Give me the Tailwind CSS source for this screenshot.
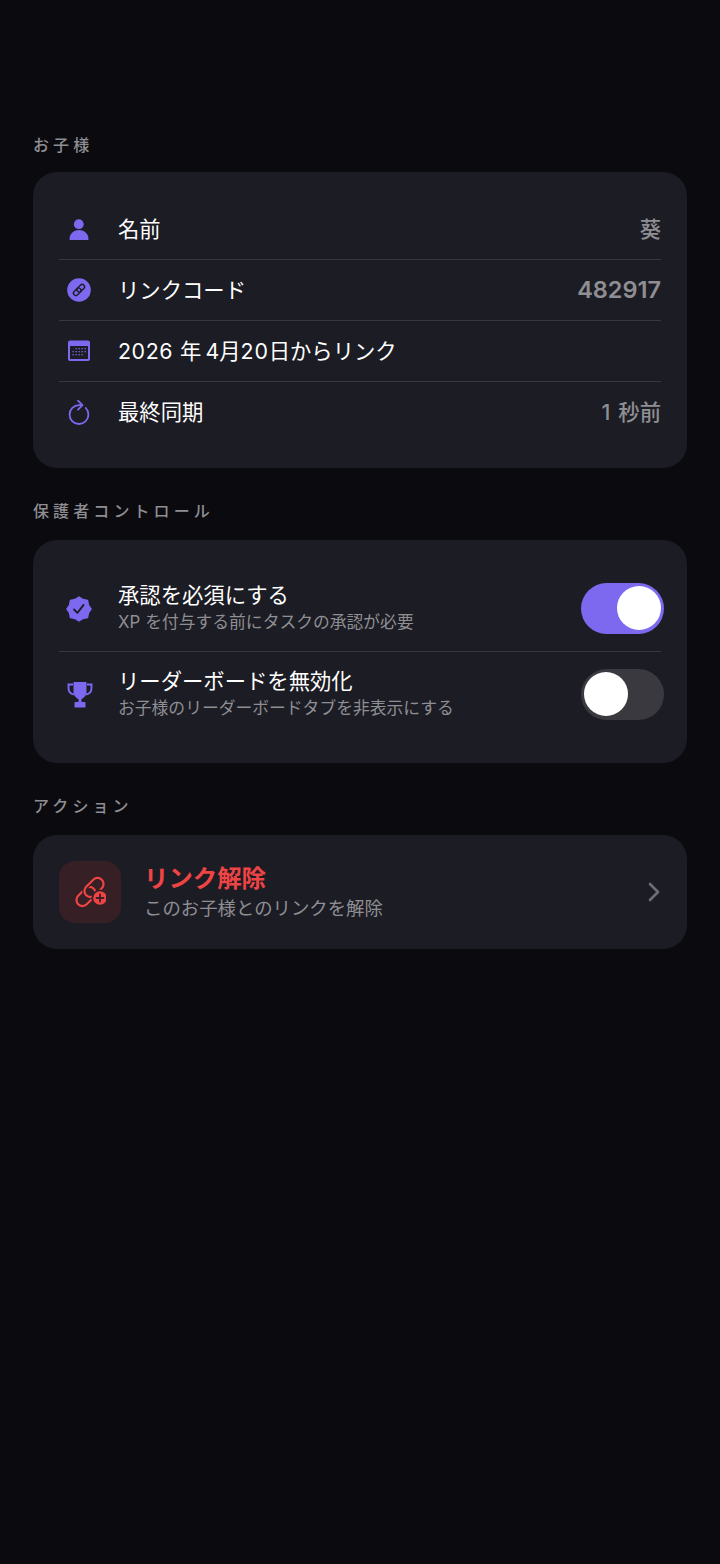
<!DOCTYPE html>
<html lang="ja"><head><meta charset="utf-8">
<script src="https://cdn.jsdelivr.net/npm/@tailwindcss/browser@4"></script>
</head>
<body class="bg-[#0a0a0f]">
<div class="w-[720px] h-[1564px] overflow-hidden pl-[33px] pr-[33px] pt-[133px] font-['Inter','Noto_Sans_CJK_JP',sans-serif] text-white">

<div class="h-[24px] leading-[24px] text-[16px] font-medium tracking-[4.1px] text-[#8e8e93]">お子様</div>
<div class="mt-[15px] h-[296px] rounded-[24px] bg-[#1c1c24] px-[26px] pt-[27px]">
  <div class="h-[61px] flex items-center border-b border-[#38383d]">
    <div class="w-[40px] flex justify-center">
      <svg class="w-[24px] h-[24px]" viewBox="0 0 24 24" fill="#7c69ef"><circle cx="11.800" cy="7.200" r="4.900"/><path d="M2.500 22c0-5 4-9 9.500-9s9.500 4 9.500 9c0 .6-.4 1-1 1H3.500c-.6 0-1-.4-1-1z"/></svg>
    </div>
    <div class="ml-[19px] text-[21.330px] leading-[30px]">名前</div>
    <div class="ml-auto text-[21.330px] font-medium leading-[30px] text-[#8e8e93]">葵</div>
  </div>
  <div class="h-[61px] flex items-center border-b border-[#38383d]">
    <div class="w-[40px] flex justify-center">
      <svg class="w-[24px] h-[24px]" viewBox="0 0 24 24"><circle cx="12" cy="12" r="11.800" fill="#7c69ef"/><g fill="none" stroke="#1c1c24" stroke-width="1.400" transform="rotate(45 12 12)"><rect x="9.600" y="5.200" width="4.800" height="8.600" rx="2.400"/><rect x="9.600" y="10.200" width="4.800" height="8.600" rx="2.400"/></g></svg>
    </div>
    <div class="ml-[19px] text-[21.330px] leading-[30px]">リンクコード</div>
    <div class="ml-auto text-[23.500px] font-semibold leading-[30px] text-[#8e8e93]">482917</div>
  </div>
  <div class="h-[61px] flex items-center border-b border-[#38383d]">
    <div class="w-[40px] flex justify-center">
      <svg class="w-[24px] h-[24px]" viewBox="0 0 24 24"><rect x="1" y="1.500" width="22" height="20.500" rx="2" fill="#7c69ef"/><rect x="3" y="7" width="18" height="13" rx=".5" fill="#1c1c24"/><g fill="#7c69ef"><rect x="8.500" y="9" width="1.300" height="1.300"/><rect x="11.500" y="9" width="1.300" height="1.300"/><rect x="14.500" y="9" width="1.300" height="1.300"/><rect x="17.500" y="9" width="1.300" height="1.300"/><rect x="5.500" y="12" width="1.300" height="1.300"/><rect x="8.500" y="12" width="1.300" height="1.300"/><rect x="11.500" y="12" width="1.300" height="1.300"/><rect x="14.500" y="12" width="1.300" height="1.300"/><rect x="17.500" y="12" width="1.300" height="1.300"/><rect x="5.500" y="15" width="1.300" height="1.300"/><rect x="8.500" y="15" width="1.300" height="1.300"/><rect x="11.500" y="15" width="1.300" height="1.300"/><rect x="14.500" y="15" width="1.300" height="1.300"/></g></svg>
    </div>
    <div class="ml-[19px] text-[21.330px] leading-[30px]"><span class="tracking-[.6px]">2026</span><span class="ml-[7px]">年</span><span class="ml-[4px]">4</span><span>月</span><span class="tracking-[.8px]">20</span><span>日</span><span>からリンク</span></div>
  </div>
  <div class="h-[60px] flex items-center">
    <div class="w-[40px] flex justify-center">
      <svg class="w-[24px] h-[26px]" viewBox="0 0 24 26" fill="none" stroke="#7c69ef" stroke-width="1.800" stroke-linecap="round" stroke-linejoin="round"><path d="M15 6.200H12A9.400 9.400 0 1 0 21.400 15.500c0-2.600-1-4.800-2.600-6.500"/><path d="M11 1.700L15.500 6.200L11 10.700"/></svg>
    </div>
    <div class="ml-[19px] text-[21.330px] leading-[30px]">最終同期</div>
    <div class="ml-auto text-[21.330px] font-medium leading-[30px] text-[#8e8e93]">1<span class="ml-[8px]">秒前</span></div>
  </div>
</div>

<div class="mt-[31px] h-[24px] leading-[24px] text-[16px] font-medium tracking-[4.1px] text-[#8e8e93]">保護者コントロール</div>
<div class="mt-[17px] h-[223px] rounded-[24px] bg-[#1c1c24] px-[26px] pt-[26px]">
  <div class="h-[86px] flex items-center border-b border-[#38383d]">
    <div class="w-[40px] flex justify-center">
      <svg class="w-[28px] h-[28px]" viewBox="0 0 28 28"><path fill="#7c69ef" stroke="#7c69ef" stroke-width="1.500" stroke-linejoin="round" d="M14 2L17.900 4.600 22.500 5.500 23.400 10.100 26 14 23.400 17.900 22.500 22.500 17.900 23.400 14 26 10.100 23.400 5.500 22.500 4.600 17.900 2 14 4.600 10.100 5.500 5.500 10.100 4.600z"/><path d="M9 14.500l3.400 3.400 6.200-8" fill="none" stroke="#1c1c24" stroke-width="1.800" stroke-linecap="round" stroke-linejoin="round"/></svg>
    </div>
    <div class="ml-[19px] -mt-[1px]">
      <div class="text-[21.330px] leading-[29px]">承認を必須にする</div>
      <div class="text-[16.800px] leading-[25px] text-[#8e8e93]">XP<span class="ml-[5px]">を付与する前にタスクの承認が必要</span></div>
    </div>
    <div class="ml-auto -mr-[3px] mb-[1px] w-[83px] h-[51px] rounded-full bg-[#7c69ef] flex items-center justify-end pr-[3px]">
      <div class="w-[44px] h-[44px] rounded-full bg-white"></div>
    </div>
  </div>
  <div class="h-[85px] flex items-center">
    <div class="w-[40px] flex justify-center">
      <svg class="w-[26px] h-[26px] ml-[1px]" viewBox="0 0 26 26" fill="#7c69ef"><path d="M6.500 0h13v9.500c0 4-2.800 6.800-5 7.500v3.500h-3V17c-2.200-.7-5-3.500-5-7.500z"/><path d="M6 2.500H1.500v3.500c0 3.800 2.300 6 5.500 6.500M20 2.500h4.500v3.500c0 3.800-2.300 6-5.500 6.500" fill="none" stroke="#7c69ef" stroke-width="1.900"/><path d="M8.500 20h9a1 1 0 0 1 1 1v4.500h-11V21a1 1 0 0 1 1-1z"/></svg>
    </div>
    <div class="ml-[19px] -mt-[1px]">
      <div class="text-[21.330px] leading-[29px]">リーダーボードを無効化</div>
      <div class="text-[16.800px] leading-[25px] text-[#8e8e93]">お子様のリーダーボードタブを非表示にする</div>
    </div>
    <div class="ml-auto -mr-[3px] mb-[1px] w-[83px] h-[51px] rounded-full bg-[#39393f] flex items-center pl-[3px]">
      <div class="w-[44px] h-[44px] rounded-full bg-white"></div>
    </div>
  </div>
</div>

<div class="mt-[31px] h-[24px] leading-[24px] text-[16px] font-medium tracking-[4.1px] text-[#8e8e93]">アクション</div>
<div class="mt-[17px] h-[114px] rounded-[24px] bg-[#1c1c24] px-[26px] flex items-center">
  <div class="w-[62px] h-[62px] rounded-[16px] bg-[#362025] flex items-center justify-center">
    <svg class="w-[32px] h-[32px]" viewBox="0 0 32 32" fill="none"><g transform="translate(-74 -876)"><g stroke="#ef4444" stroke-width="2.200"><rect x="75" y="890.500" width="22" height="12" rx="6" transform="rotate(-45 86 896.500)"/><rect x="83" y="881.500" width="22" height="12" rx="6" transform="rotate(-45 94 887.500)" stroke="#362025" stroke-width="4.500"/><rect x="83" y="881.500" width="22" height="12" rx="6" transform="rotate(-45 94 887.500)"/></g><circle cx="100" cy="898" r="8.500" fill="#362025"/><circle cx="100" cy="898" r="6.800" fill="#ef4444"/><path d="M100 894.500v7M96.500 898h7" stroke="#362025" stroke-width="1.800" stroke-linecap="round"/></g></svg>
  </div>
  <div class="ml-[23px]">
    <div class="text-[24.400px] font-semibold leading-[33px] text-[#ef4444]">リンク解除</div>
    <div class="text-[18.400px] leading-[27px] text-[#8e8e93]">このお子様とのリンクを解除</div>
  </div>
  <svg class="ml-auto w-[14px] h-[22px]" viewBox="0 0 14 22" fill="none" stroke="#6d6d73" stroke-width="2.600" stroke-linecap="round" stroke-linejoin="round"><path d="M3 3l8 8-8 8"/></svg>
</div>
</div>
</body></html>
